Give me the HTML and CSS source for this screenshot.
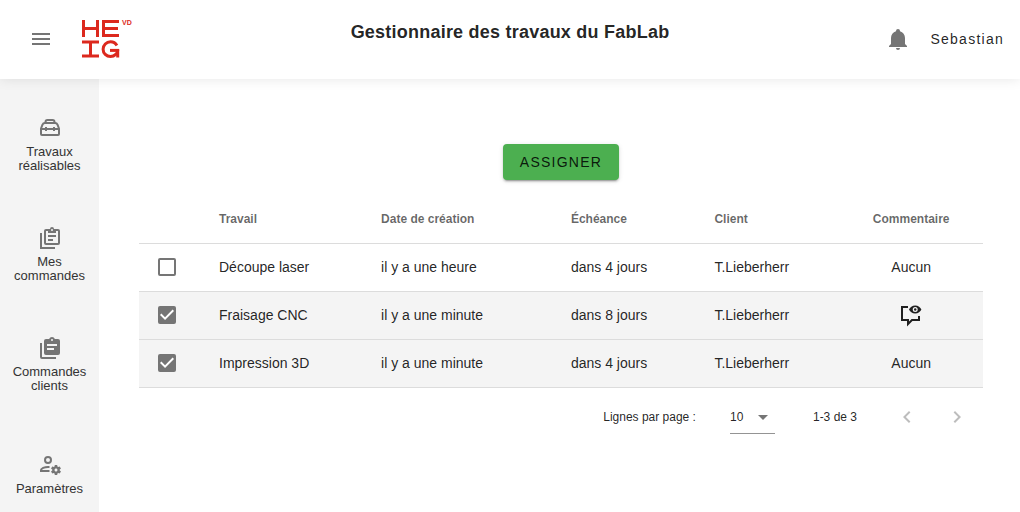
FILE: index.html
```html
<!DOCTYPE html>
<html lang="fr">
<head>
<meta charset="utf-8">
<meta name="viewport" content="width=device-width, initial-scale=1">
<title>Gestionnaire des travaux du FabLab</title>
<link rel="stylesheet" href="styles.css">
</head>
<body>
<div class="app">
  <header class="topbar">
    <div class="topbar-start">
      <button class="icon-button" type="button" aria-label="Menu">
        <svg class="icon" viewBox="0 0 24 24"><path d="M3,6H21V8H3V6M3,11H21V13H3V11M3,16H21V18H3V16Z"/></svg>
      </button>
      <svg class="logo" viewBox="0 0 52 40" role="img" aria-label="HEIG-VD">
        <g fill="none" stroke="currentColor" stroke-width="3">
          <line x1="2.5" y1="1" x2="2.5" y2="18"/>
          <line x1="16.5" y1="1" x2="16.5" y2="18"/>
          <line x1="2" y1="9.5" x2="17" y2="9.5"/>
          <line x1="22.5" y1="1" x2="22.5" y2="18"/>
          <line x1="22" y1="2.5" x2="38" y2="2.5"/>
          <line x1="22" y1="9.5" x2="37" y2="9.5"/>
          <line x1="22" y1="16.5" x2="38" y2="16.5"/>
          <line x1="1" y1="23" x2="18" y2="23"/>
          <line x1="9.500" y1="23" x2="9.500" y2="37"/>
          <line x1="1" y1="37" x2="18" y2="37"/>
          <circle cx="29.5" cy="30.2" r="7.400" pathLength="360" stroke-dasharray="330 30"/>
          <line x1="29" y1="31.4" x2="38" y2="31.4"/>
          <line x1="36.700" y1="31" x2="36.700" y2="38.5"/>
        </g>
        <text class="logo-suffix" x="41" y="6">VD</text>
      </svg>
    </div>
    <h1 class="topbar-title">Gestionnaire des travaux du FabLab</h1>
    <div class="topbar-end">
      <button class="icon-button" type="button" aria-label="Notifications">
        <svg class="icon" viewBox="0 0 24 24"><path d="M21,19V20H3V19L5,17V11C5,7.9 7.03,5.17 10,4.29C10,4.19 10,4.1 10,4A2,2 0 0,1 12,2A2,2 0 0,1 14,4C14,4.1 14,4.19 14,4.29C16.97,5.17 19,7.9 19,11V17L21,19M14,21A2,2 0 0,1 12,23A2,2 0 0,1 10,21"/></svg>
      </button>
      <button class="user-button" type="button">Sebastian</button>
    </div>
  </header>

  <div class="body">
    <nav class="sidebar">
      <a class="nav-item" href="#">
        <svg class="icon" viewBox="0 0 24 24"><g fill="none" stroke="currentColor" stroke-width="2" stroke-linejoin="round"><path d="M3,12.500L4.500,8.700Q5.200,7 7,7H17Q18.800,7 19.500,8.700L21,12.500V18Q21,19 20,19H4Q3,19 3,18Z"/><path d="M7.500,7V6Q7.500,4 9.500,4H14.500Q16.500,4 16.500,6V7M3,13H21M8,11V15M16,11V15"/></g></svg>
        <span>Travaux réalisables</span>
      </a>
      <a class="nav-item" href="#">
        <svg class="icon" viewBox="0 0 24 24"><g fill="none" stroke="currentColor" stroke-width="2"><rect x="7" y="4" width="14" height="14" rx="1"/><path d="M3,7V22H17"/><path d="M10,10H18M10,14H15"/></g><path d="M10,3H12A2,2 0 0,1 16,3H18V7H10Z"/><circle class="hole" cx="14" cy="4" r="1"/></svg>
        <span>Mes commandes</span>
      </a>
      <a class="nav-item" href="#">
        <svg class="icon" viewBox="0 0 24 24"><path d="M4,7V21H18V23H4A2,2 0 0,1 2,21V7H4M20,3H16.830C16.400,1.800 15.300,1 14,1C12.700,1 11.600,1.800 11.170,3H8A2,2 0 0,0 6,5V17A2,2 0 0,0 8,19H20A2,2 0 0,0 22,17V5A2,2 0 0,0 20,3M14,3A1,1 0 0,1 15,4A1,1 0 0,1 14,5A1,1 0 0,1 13,4A1,1 0 0,1 14,3M16,14H9V12H16V14M19,10H9V8H19V10Z"/></svg>
        <span>Commandes clients</span>
      </a>
      <a class="nav-item" href="#">
        <svg class="icon" viewBox="0 0 24 24"><g fill="none" stroke="currentColor" stroke-width="2"><circle cx="10" cy="7" r="3"/><path d="M11.500,13.900H10C6.500,13.900 3,15.500 3,17V18H11.500"/></g><path d="M17 12C16.870 12 16.760 12.090 16.740 12.210L16.550 13.530C16.250 13.660 15.960 13.820 15.700 14L14.460 13.500C14.350 13.500 14.220 13.500 14.150 13.630L13.150 15.360C13.090 15.470 13.110 15.600 13.210 15.680L14.270 16.500C14.250 16.670 14.240 16.830 14.240 17C14.240 17.170 14.250 17.330 14.270 17.500L13.210 18.320C13.120 18.400 13.090 18.530 13.150 18.640L14.150 20.370C14.210 20.500 14.340 20.500 14.460 20.500L15.700 20C15.960 20.180 16.240 20.350 16.550 20.470L16.740 21.790C16.760 21.910 16.860 22 17 22H19C19.110 22 19.220 21.910 19.240 21.790L19.430 20.470C19.730 20.340 20 20.180 20.270 20L21.500 20.500C21.630 20.500 21.760 20.500 21.830 20.370L22.830 18.640C22.890 18.530 22.860 18.400 22.770 18.320L21.700 17.500C21.720 17.330 21.740 17.170 21.740 17C21.740 16.830 21.730 16.670 21.700 16.500L22.760 15.680C22.850 15.600 22.880 15.470 22.820 15.360L21.820 13.630C21.760 13.500 21.630 13.500 21.500 13.500L20.270 14C20 13.820 19.730 13.650 19.420 13.530L19.230 12.210C19.220 12.090 19.110 12 19 12H17M18 15.500C18.830 15.500 19.500 16.170 19.500 17S18.820 18.500 18 18.500C17.160 18.500 16.500 17.830 16.500 17S17.170 15.500 18 15.500Z"/></svg>
        <span>Paramètres</span>
      </a>
    </nav>

    <main class="content">
      <button class="assign-button" type="button">ASSIGNER</button>

      <table class="jobs">
        <colgroup>
          <col class="col-check"><col class="col-job"><col class="col-date"><col class="col-due"><col class="col-client"><col>
        </colgroup>
        <thead>
          <tr><td></td><th scope="col">Travail</th><th scope="col">Date de création</th><th scope="col">Échéance</th><th scope="col">Client</th><th scope="col" class="centered">Commentaire</th></tr>
        </thead>
        <tbody>
          <tr>
            <td class="check-cell"><input class="checkbox" type="checkbox" aria-label="Découpe laser"></td>
            <td>Découpe laser</td><td>il y a une heure</td><td>dans 4 jours</td><td>T.Lieberherr</td><td class="centered">Aucun</td>
          </tr>
          <tr class="selected">
            <td class="check-cell"><input class="checkbox" type="checkbox" aria-label="Fraisage CNC" checked></td>
            <td>Fraisage CNC</td><td>il y a une minute</td><td>dans 8 jours</td><td>T.Lieberherr</td>
            <td class="centered">
              <button class="icon-button comment-button" type="button" aria-label="Voir le commentaire">
                <svg class="icon" viewBox="0 0 24 24"><path fill="none" stroke="currentColor" stroke-width="2" d="M9,4H3V17H9V21L13,17H20V13"/><path fill-rule="evenodd" d="M10,6.500C11,4.200 13.200,2.500 16.200,2.500S21.400,4.200 22.400,6.500C21.400,8.800 19.200,10.500 16.200,10.500S11,8.800 10,6.500ZM16.200,4A2.500,2.500 0 0,0 16.200,9A2.500,2.500 0 0,0 16.200,4Z"/><circle cx="16.200" cy="6.500" r="1.200"/></svg>
              </button>
            </td>
          </tr>
          <tr class="selected">
            <td class="check-cell"><input class="checkbox" type="checkbox" aria-label="Impression 3D" checked></td>
            <td>Impression 3D</td><td>il y a une minute</td><td>dans 4 jours</td><td>T.Lieberherr</td><td class="centered">Aucun</td>
          </tr>
        </tbody>
      </table>

      <div class="pager">
        <label for="page-size">Lignes par page :</label>
        <div class="select-box">
          <select id="page-size"><option>10</option><option>25</option><option>50</option></select>
          <svg class="icon select-arrow" viewBox="0 0 24 24"><path d="M7,10L12,15L17,10H7Z"/></svg>
        </div>
        <span class="range">1-3 de 3</span>
        <button class="page-button" type="button" aria-label="Page précédente" disabled>
          <svg class="icon" viewBox="0 0 24 24"><path d="M15.410,16.580L10.830,12L15.410,7.410L14,6L8,12L14,18L15.410,16.580Z"/></svg>
        </button>
        <button class="page-button" type="button" aria-label="Page suivante" disabled>
          <svg class="icon" viewBox="0 0 24 24"><path d="M8.590,16.580L13.170,12L8.590,7.410L10,6L16,12L10,18L8.590,16.580Z"/></svg>
        </button>
      </div>
    </main>
  </div>
</div>
</body>
</html>
```
FILE: styles.css
```css
* {
  box-sizing: border-box;
}

body {
  margin: 0;
  background: #fff;
  color: rgba(0, 0, 0, 0.87);
  font-family: "Liberation Sans", Arial, sans-serif;
  font-size: 14px;
}

button,
select {
  padding: 0;
  border: 0;
  background: none;
  color: inherit;
  font: inherit;
  cursor: pointer;
}

.app {
  display: flex;
  flex-direction: column;
  height: 100vh;
}

.icon {
  display: block;
  flex: none;
  width: 24px;
  height: 24px;
  fill: currentColor;
}

.icon-button {
  color: #757575;
}

/* Top bar */

.topbar {
  display: grid;
  grid-template-columns: 1fr auto 1fr;
  padding: 19px 16px 20px;
  background: #fff;
  box-shadow: 0 0 12px rgba(0, 0, 0, 0.1);
  z-index: 1;
}

.topbar-start,
.topbar-end {
  display: flex;
  align-items: center;
}

.topbar-start {
  gap: 28px;
  padding-left: 13px;
}

.topbar-end {
  justify-content: flex-end;
  gap: 20px;
}

.logo {
  width: 52px;
  height: 40px;
  color: #dc291e;
}

.logo-suffix {
  fill: currentColor;
  font-size: 7px;
  font-weight: bold;
}

.topbar-title {
  margin: 0;
  font-size: 18px;
  line-height: 26px;
  letter-spacing: 0.0125em;
}

.user-button {
  letter-spacing: 0.09em;
}

/* Side navigation */

.body {
  display: flex;
  flex: 1;
  min-height: 0;
}

.sidebar {
  flex: none;
  width: 99px;
  padding-top: 10px;
  background: #f4f4f4;
  overflow: hidden;
}

.nav-item {
  display: flex;
  flex-direction: column;
  align-items: center;
  justify-content: center;
  gap: 5px;
  height: 110px;
  padding: 0 12px;
  color: #333;
  font-size: 13px;
  line-height: 14px;
  text-align: center;
  text-decoration: none;
}

.nav-item .icon {
  color: #757575;
}

.nav-item .hole {
  fill: #f4f4f4;
}

/* Content */

.content {
  display: flex;
  flex: 1;
  flex-direction: column;
  min-width: 0;
  padding: 65px 37px 0 40px;
  overflow: auto;
}

.assign-button {
  align-self: center;
  height: 36px;
  margin-bottom: 15px;
  padding: 0 17px;
  border-radius: 4px;
  background: #4caf50;
  letter-spacing: 0.09em;
  box-shadow: 0 3px 1px -2px rgba(0, 0, 0, 0.2), 0 2px 2px rgba(0, 0, 0, 0.14), 0 1px 5px rgba(0, 0, 0, 0.12);
}

.jobs {
  width: 100%;
  border-collapse: separate;
  border-spacing: 0;
  table-layout: fixed;
}

.col-check {
  width: 64px;
}

.col-job {
  width: 19.2%;
}

.col-date {
  width: 22.5%;
}

.col-due {
  width: 17%;
}

.col-client {
  width: 16.7%;
}

.jobs th,
.jobs td {
  height: 48px;
  padding: 0 16px;
  border-bottom: 1px solid #dcdcdc;
  text-align: left;
}

.jobs tbody td {
  padding-bottom: 1px;
}

.jobs th {
  color: rgba(0, 0, 0, 0.6);
  font-size: 12px;
}

.jobs thead td,
.jobs thead th {
  height: 49px;
}

.jobs .centered {
  text-align: center;
}

.jobs .check-cell {
  padding-left: 19px;
}

.selected {
  background: #f4f4f4;
}

.checkbox {
  display: block;
  width: 18px;
  height: 18px;
  margin: 0;
  border: 2px solid #757575;
  border-radius: 2px;
  appearance: none;
}

.checkbox:checked {
  background: #757575;
}

.checkbox:checked::before {
  content: "";
  display: block;
  width: 14px;
  height: 14px;
  background: #fff;
  clip-path: polygon(0 50%, 10% 40%, 36% 66%, 90% 11%, 100% 21%, 36% 86%);
}

.comment-button {
  color: rgba(0, 0, 0, 0.87);
  vertical-align: middle;
}

/* Pagination */

.pager {
  display: flex;
  align-items: center;
  justify-content: flex-end;
  height: 58px;
  padding-right: 8px;
  font-size: 12px;
}

.select-box {
  display: grid;
  align-items: center;
  width: 45px;
  height: 34px;
  margin: 0 38px 0 34px;
  border-bottom: 1px solid #949494;
}

.select-box select,
.select-arrow {
  grid-area: 1 / 1;
}

.select-box select {
  appearance: none;
}

.select-arrow {
  justify-self: end;
  color: #757575;
  pointer-events: none;
}

.range {
  margin-right: 32px;
}

.page-button {
  display: grid;
  place-items: center;
  width: 36px;
  height: 36px;
  color: #bdbdbd;
}

.page-button + .page-button {
  margin-left: 14px;
}
```
